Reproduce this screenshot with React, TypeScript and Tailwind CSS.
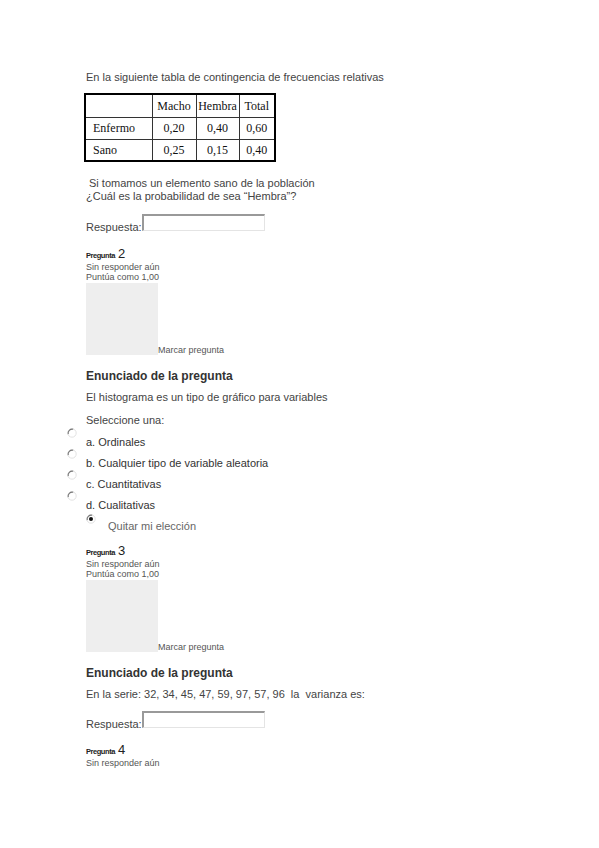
import React from 'react';

const sans = "font-['Liberation_Sans',Arial,sans-serif]";

const Radio: React.FC<{ checked?: boolean }> = ({ checked }) => (
  <svg width="10" height="10" viewBox="0 0 10 10" className="shrink-0">
    <circle cx="5" cy="5" r="4.2" fill="#fff" stroke="#e2e2e2" strokeWidth="1" />
    <path d="M1.2 6.2 A4.2 4.2 0 0 1 6.2 1.2" fill="none" stroke="#777" strokeWidth="1.1" />
    {checked && <circle cx="5" cy="5" r="2" fill="#111" />}
  </svg>
);

const AnswerBox: React.FC = () => (
  <div className="flex items-end h-[17px]">
    <span className="text-[11px] leading-[13px] text-[#444] mb-[-3px]">Respuesta:</span>
    <div className="w-[123px] h-[17px] bg-white border-t-2 border-l-2 border-r border-b border-t-[#999] border-l-[#999] border-r-[#e4e4e4] border-b-[#e4e4e4]" />
  </div>
);

const QuestionInfo: React.FC<{ n: number; graded?: boolean; flag?: boolean }> = ({ n, graded = true, flag = true }) => (
  <div>
    <div className="h-[15px] leading-[15px] text-[#222] flex items-baseline">
      <span className="text-[7.5px] font-bold tracking-[-0.45px]">Pregunta</span>
      <span className="text-[13px] ml-[3px]">{n}</span>
    </div>
    <div className="text-[9px] leading-[10px] text-[#555] mt-[1px]">Sin responder aún</div>
    {graded && <div className="text-[9px] leading-[10px] text-[#555]">Puntúa como 1,00</div>}
    {flag && (
      <div className="flex items-end mt-[1px]">
        <div className="w-[72px] h-[72px] bg-[#eeeeee]" />
        <span className="text-[9px] leading-[11px] text-[#555] mb-[-1px]">Marcar pregunta</span>
      </div>
    )}
  </div>
);

const Option: React.FC<{ label: string }> = ({ label }) => (
  <div className="flex items-start h-[21px] ml-[-19px]">
    <Radio />
    <span className="ml-[9px] mt-[7px] text-[11px] leading-[14px] text-[#333]">{label}</span>
  </div>
);

const cell = "border border-[#333] text-center px-[1px]";

export default function App() {
  return (
    <div className={`${sans} bg-white min-h-[848px] w-[599px] pl-[86px] pt-[70px] text-[#333]`}>
      <div className="text-[11px] leading-[14px] text-[#444]">En la siguiente tabla de contingencia de frecuencias relativas</div>

      <table className="mt-[9px] ml-[-2px] table-fixed w-[192px] border-collapse border-2 border-black font-['Liberation_Serif','Times_New_Roman',serif] text-[12px] text-[#111]">
        <tbody>
          <tr className="h-[23px]">
            <td className={`${cell} w-[67px]`}></td>
            <td className={`${cell} w-[44px]`}>Macho</td>
            <td className={`${cell} w-[43px] px-0`}>Hembra</td>
            <td className={cell}>Total</td>
          </tr>
          <tr className="h-[22px]">
            <td className={`${cell} text-left pl-[7px]`}>Enfermo</td>
            <td className={cell}>0,20</td>
            <td className={cell}>0,40</td>
            <td className={cell}>0,60</td>
          </tr>
          <tr className="h-[22px]">
            <td className={`${cell} text-left pl-[7px]`}>Sano</td>
            <td className={cell}>0,25</td>
            <td className={cell}>0,15</td>
            <td className={cell}>0,40</td>
          </tr>
        </tbody>
      </table>

      <div className="mt-[15px] text-[11px] leading-[13px] text-[#444]">
        <div className="pl-[3px]">Si tomamos un elemento sano de la población</div>
        <div>¿Cuál es la probabilidad de sea “Hembra”?</div>
      </div>

      <div className="mt-[11px]">
        <AnswerBox />
      </div>

      <div className="mt-[15px]">
        <QuestionInfo n={2} />
      </div>

      <div className="mt-[14px] text-[12px] leading-[14px] font-bold text-[#333]">Enunciado de la pregunta</div>
      <div className="mt-[7px] text-[11px] leading-[14px] text-[#444]">El histograma es un tipo de gráfico para variables</div>
      <div className="mt-[9px] text-[11px] leading-[14px] text-[#444]">Seleccione una:</div>

      <div className="mt-[1px]">
        <Option label="a. Ordinales" />
        <Option label="b. Cualquier tipo de variable aleatoria" />
        <Option label="c. Cuantitativas" />
        <Option label="d. Cualitativas" />
        <div className="flex items-start h-[19px] mt-[2px]">
          <Radio checked />
          <span className="ml-[12px] mt-[5px] text-[11px] leading-[14px] text-[#666]">Quitar mi elección</span>
        </div>
      </div>

      <div className="mt-[10px]">
        <QuestionInfo n={3} />
      </div>

      <div className="mt-[14px] text-[12px] leading-[14px] font-bold text-[#333]">Enunciado de la pregunta</div>
      <div className="mt-[7px] text-[11px] leading-[14px] text-[#444] whitespace-pre">En la serie: 32, 34, 45, 47, 59, 97, 57, 96  la  varianza es:</div>

      <div className="mt-[10px]">
        <AnswerBox />
      </div>

      <div className="mt-[14px]">
        <QuestionInfo n={4} graded={false} flag={false} />
      </div>
    </div>
  );
}
